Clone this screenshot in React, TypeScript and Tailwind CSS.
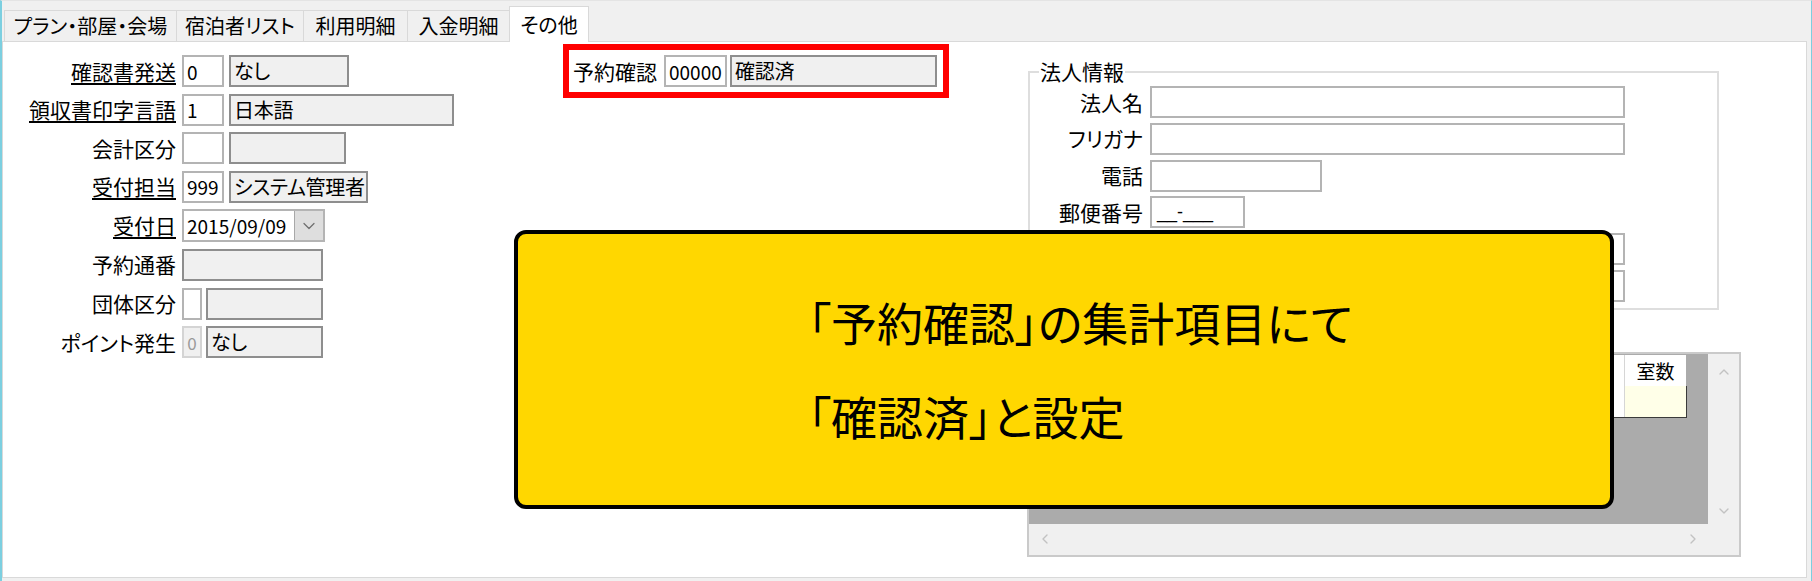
import { ChevronDown, ChevronLeft, ChevronRight, ChevronUp } from 'lucide-react'
import type { ReactNode } from 'react'

const tabs = [
  { label: 'プラン・部屋・会場', w: 'w-[172px]' },
  { label: '宿泊者リスト', w: 'w-[127px]' },
  { label: '利用明細', w: 'w-[104px]' },
  { label: '入金明細', w: 'w-[102px]' },
]

function Label({ children, u }: { children?: ReactNode; u?: boolean }) {
  return (
    <span
      className={
        u
          ? 'justify-self-end whitespace-nowrap text-[21px] leading-none underline underline-offset-[3px] decoration-[1.5px]'
          : 'justify-self-end whitespace-nowrap text-[21px] leading-none'
      }
    >
      {children}
    </span>
  )
}

function Field({ w, children }: { w: string; children?: ReactNode }) {
  return (
    <div className={`${w} flex h-[32px] items-center overflow-hidden whitespace-nowrap border-2 border-[#b4b4b4] bg-white px-[3px] text-[19px] leading-none`}>
      {children}
    </div>
  )
}

function ReadOnly({ w, children }: { w: string; children?: ReactNode }) {
  return (
    <div className={`${w} flex h-[32px] items-center overflow-hidden whitespace-nowrap border-2 border-[#8e8e8e] bg-[#f0f0f0] px-[3px] text-[20px] leading-none tracking-[-0.3px]`}>
      {children}
    </div>
  )
}

function LeftForm() {
  return (
    <div className="grid w-[560px] shrink-0 grid-cols-[173px_auto] items-center gap-x-[6px] gap-y-[6.6px] pt-[13px]">
      <Label u>確認書発送</Label>
      <div className="flex gap-[5px]">
        <Field w="w-[42px]">0</Field>
        <ReadOnly w="w-[120px]">なし</ReadOnly>
      </div>

      <Label u>領収書印字言語</Label>
      <div className="flex gap-[5px]">
        <Field w="w-[42px]">1</Field>
        <ReadOnly w="w-[225px]">日本語</ReadOnly>
      </div>

      <Label>会計区分</Label>
      <div className="flex gap-[5px]">
        <Field w="w-[42px]" />
        <ReadOnly w="w-[117px]" />
      </div>

      <Label u>受付担当</Label>
      <div className="flex gap-[5px]">
        <Field w="w-[42px]">999</Field>
        <ReadOnly w="w-[139px]">システム管理者</ReadOnly>
      </div>

      <Label u>受付日</Label>
      <div className="flex h-[33px] w-[143px] items-stretch border-2 border-[#b4b4b4] bg-white">
        <span className="flex flex-1 items-center pl-[3px] text-[19px] leading-none">2015/09/09</span>
        <span className="flex w-[29px] items-center justify-center border-l border-[#a8a8a8] bg-[#dedede]">
          <ChevronDown size={20} strokeWidth={1.5} className="text-[#6f6f6f]" />
        </span>
      </div>

      <Label>予約通番</Label>
      <ReadOnly w="w-[141px]" />

      <Label>団体区分</Label>
      <div className="flex gap-[4px]">
        <Field w="w-[20px]" />
        <ReadOnly w="w-[117px]" />
      </div>

      <Label>ポイント発生</Label>
      <div className="flex gap-[4px]">
        <div className="flex h-[32px] w-[20px] items-center justify-center border-2 border-[#d4d4d4] bg-[#f0f0f0] text-[17px] leading-none text-[#9a9a9a]">
          0
        </div>
        <ReadOnly w="w-[117px]">なし</ReadOnly>
      </div>
    </div>
  )
}

function Highlight() {
  return (
    <div className="mt-[2px] flex h-[54px] w-[386px] shrink-0 items-center gap-[7px] border-[6px] border-[#ff0000] pl-[4px]">
      <span className="text-[21px] leading-none">予約確認</span>
      <div className="flex gap-[3px]">
        <Field w="w-[63px]">00000</Field>
        <ReadOnly w="w-[207px]">確認済</ReadOnly>
      </div>
    </div>
  )
}

function CorpInfo() {
  return (
    <fieldset className="ml-[1px] mt-[19px] w-[691px] border-2 border-[#dedede] pb-[6px]">
      <legend className="ml-[9px] px-[1px] text-[21px] leading-[21px]">法人情報</legend>
      <div className="grid grid-cols-[113px_auto] items-center gap-x-[7px] gap-y-[4.8px] pt-[4px]">
        <Label>法人名</Label>
        <Field w="w-[475px]" />
        <Label>フリガナ</Label>
        <Field w="w-[475px]" />
        <Label>電話</Label>
        <Field w="w-[172px]" />
        <Label>郵便番号</Label>
        <Field w="w-[95px]">
          <span className="pl-[2px] text-[18px] font-['Liberation_Sans',sans-serif]">__-___</span>
        </Field>
        {/* rows hidden under the callout */}
        <Label />
        <Field w="w-[475px]" />
        <Label />
        <Field w="w-[475px]" />
      </div>
    </fieldset>
  )
}

function RoomGrid() {
  return (
    <div className="mt-[42px] flex h-[205px] w-[714px] flex-col border-2 border-[#cacaca] bg-[#f0f0f0]">
      <div className="flex min-h-0 flex-1">
        <div className="flex-1 bg-[#ababab] pt-[1px]">
          <div className="flex h-[31px] w-[657px]">
            <div className="w-[595px] bg-white" />
            <div className="flex w-[62px] items-center justify-center border-l border-[#d6d6d6] bg-white text-[19px] leading-none">
              室数
            </div>
          </div>
          <div className="flex h-[32px] w-[658px] border-b border-r border-[#3a3a3a]">
            <div className="w-[595px] bg-white" />
            <div className="w-[62px] border-l border-[#d6d6d6] bg-[#ffffe8]" />
          </div>
        </div>
        <div className="flex w-[31px] flex-col items-center justify-between pb-[5px] pt-[10px]">
          <ChevronUp size={16} strokeWidth={2} className="text-[#c2c2c2]" />
          <ChevronDown size={16} strokeWidth={2} className="text-[#c2c2c2]" />
        </div>
      </div>
      <div className="flex h-[31px]">
        <div className="flex flex-1 items-center justify-between pl-[8px] pr-[7px]">
          <ChevronLeft size={16} strokeWidth={2} className="text-[#c2c2c2]" />
          <ChevronRight size={16} strokeWidth={2} className="text-[#c2c2c2]" />
        </div>
        <div className="w-[31px]" />
      </div>
    </div>
  )
}

export default function App() {
  return (
    <div className="relative flex h-[581px] w-[1812px] flex-col overflow-hidden border-l-2 border-r border-t border-l-[#7ccfe0] border-r-[#7ccfe0] border-t-[#e4e4e4] bg-[#f0f0f0] font-['Noto_Sans_CJK_JP','Noto_Sans',sans-serif] text-black [font-feature-settings:'palt']">
      {/* tab strip */}
      <div className="flex h-[40px] shrink-0 items-end pl-[2px]">
        {tabs.map((t) => (
          <div
            key={t.label}
            className={`${t.w} flex h-[31px] items-center justify-center whitespace-nowrap border-l border-t border-[#d9d9d9] bg-[#f0f0f0] text-[20px] leading-none`}
          >
            {t.label}
          </div>
        ))}
        <div className="relative z-10 -mb-px flex h-[36px] w-[80px] items-center justify-center border-x border-t border-[#d9d9d9] bg-white text-[20px] leading-none">
          その他
        </div>
      </div>

      {/* tab page */}
      <div className="mb-[3px] mr-[4px] flex flex-1 items-start border border-[#d9d9d9] bg-white">
        <LeftForm />
        <Highlight />
        <div className="ml-[78px] flex w-[714px] flex-col">
          <CorpInfo />
          <RoomGrid />
        </div>
      </div>

      {/* callout */}
      <div className="absolute left-[512px] top-[229px] flex h-[279px] w-[1100px] flex-col gap-[48px] rounded-[12px] border-4 border-black bg-[#ffd700] pl-[290px] pt-[64px] text-[46px] leading-[46px]">
        <p>「予約確認」の集計項目にて</p>
        <p>「確認済」と設定</p>
      </div>
    </div>
  )
}
